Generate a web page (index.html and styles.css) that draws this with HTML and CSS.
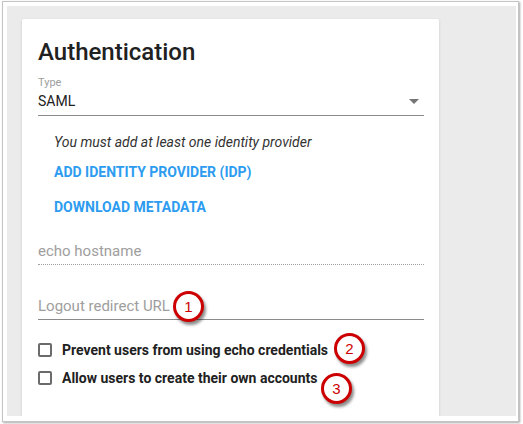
FILE: index.html
```html
<!DOCTYPE html>
<html>
<head>
<meta charset="utf-8">
<link rel="stylesheet" href="styles.css">
</head>
<body>
<div class="screen">
  <div class="frame">
    <div class="backdrop">
      <div class="card">
        <h1 class="title">Authentication</h1>
        <div class="select">
          <div class="select-label">Type</div>
          <div class="select-row">
            <span class="select-value">SAML</span>
            <span class="caret"></span>
          </div>
        </div>
        <div class="saml">
          <div class="hint">You must add at least one identity provider</div>
          <div class="link link-add">ADD IDENTITY PROVIDER (IDP)</div>
          <div class="link link-download">DOWNLOAD METADATA</div>
        </div>
        <div class="field field-dotted"><span class="placeholder">echo hostname</span></div>
        <div class="field field-solid"><span class="placeholder">Logout redirect URL</span></div>
        <label class="check check-first"><span class="box"></span><span class="check-text">Prevent users from using echo credentials</span></label>
        <label class="check check-second"><span class="box"></span><span class="check-text">Allow users to create their own accounts</span></label>
      </div>
    </div>
  </div>
  <div class="callout callout-1">1</div>
  <div class="callout callout-2">2</div>
  <div class="callout callout-3">3</div>
</div>
</body>
</html>
```
FILE: styles.css
```css
html, body {
  margin: 0;
  padding: 0;
  background: #ffffff;
}
body {
  font-family: Roboto, "Liberation Sans", Arial, sans-serif;
  color: #212121;
}
.screen {
  position: relative;
  width: 523px;
  height: 424px;
  overflow: hidden;
}
.frame {
  margin: 1px 0 0 2px;
  width: 517px;
  height: 421px;
  box-sizing: border-box;
  border: 1px solid #c4c4c4;
  box-shadow: 1px 1px 2px rgba(0, 0, 0, 0.35);
  background: #ffffff;
  padding: 4px 0 0 4px;
}
.backdrop {
  width: 509px;
  height: 410px;
  background: #ebebeb;
  overflow: hidden;
  padding: 13px 0 0 15px;
  box-sizing: border-box;
}
.card {
  width: 417px;
  height: 420px;
  background: #ffffff;
  box-sizing: border-box;
  padding: 19px 15px 0 16px;
  border-radius: 2px;
  box-shadow: 0 1px 3px rgba(0, 0, 0, 0.15);
  display: flex;
  flex-direction: column;
}
.title {
  margin: 0;
  font-size: 24px;
  line-height: 28px;
  font-weight: 500;
  color: #212121;
}
.select {
  margin-top: 10px;
  border-bottom: 1px solid #8a8a8a;
  padding-bottom: 4px;
}
.select-label {
  font-size: 11px;
  line-height: 14px;
  color: #9e9e9e;
}
.select-row {
  margin-top: 1px;
  display: flex;
  align-items: center;
  justify-content: space-between;
  height: 20px;
}
.select-value {
  font-size: 14px;
  line-height: 20px;
}
.caret {
  width: 0;
  height: 0;
  border-left: 5px solid transparent;
  border-right: 5px solid transparent;
  border-top: 5px solid #757575;
  margin-right: 5px;
  margin-top: 1px;
}
.saml {
  padding-left: 16px;
  display: flex;
  flex-direction: column;
}
.hint {
  margin-top: 16px;
  font-size: 14px;
  line-height: 20px;
  font-style: italic;
  color: #333333;
}
.link {
  font-size: 14px;
  line-height: 20px;
  font-weight: 700;
  color: #2d9cf0;
}
.link-add {
  margin-top: 10px;
}
.link-download {
  margin-top: 15px;
}
.field {
  padding-bottom: 3px;
}
.placeholder {
  font-size: 15px;
  line-height: 20px;
  color: #9e9e9e;
  display: block;
}
.field-dotted {
  margin-top: 24px;
  border-bottom: 1px dotted #9e9e9e;
}
.field-solid {
  margin-top: 31px;
  border-bottom: 1px solid #8a8a8a;
}
.check {
  display: flex;
  align-items: center;
  gap: 10px;
  font-size: 14px;
  line-height: 20px;
  font-weight: 700;
  color: #212121;
}
.check-first {
  margin-top: 20px;
}
.check-second {
  margin-top: 8px;
}
.box {
  width: 14px;
  height: 14px;
  box-sizing: border-box;
  border: 2px solid #6b6b6b;
  border-radius: 2px;
  flex: none;
}
.callout {
  position: absolute;
  width: 31px;
  height: 31px;
  box-sizing: border-box;
  border: 3px solid #cc0000;
  border-radius: 50%;
  background: #ffffff;
  box-shadow: 2px 3px 3px rgba(0, 0, 0, 0.45);
  color: #cc0000;
  font-family: "Liberation Sans", Arial, sans-serif;
  font-size: 15px;
  line-height: 25px;
  text-align: center;
}
.callout-1 {
  left: 173px;
  top: 291px;
}
.callout-2 {
  left: 334px;
  top: 333px;
}
.callout-3 {
  left: 321px;
  top: 373px;
}
```
